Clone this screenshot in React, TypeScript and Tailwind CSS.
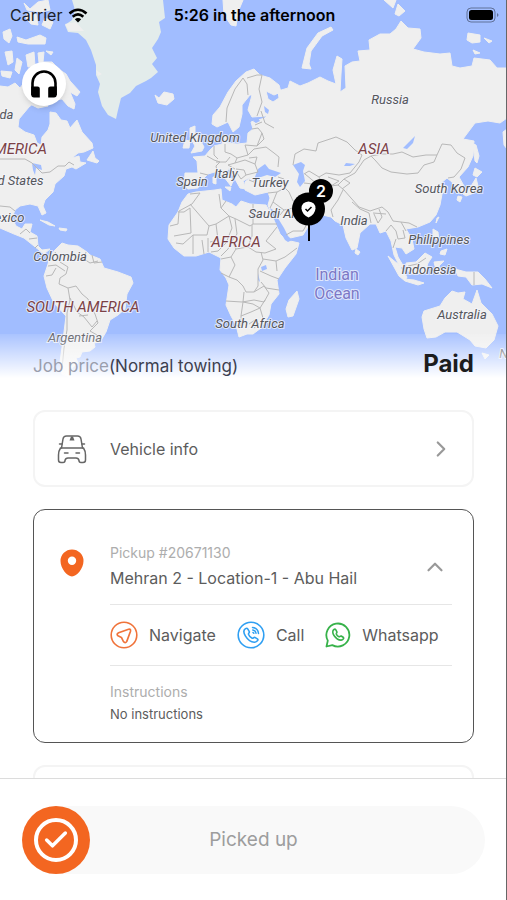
import { Check, ChevronRight, ChevronUp } from 'lucide-react';

type MapLabel = { text: string; x: number; y: number; kind: 'country' | 'continent' | 'ocean' };

const labels: MapLabel[] = [
  { text: 'Canada', x: -8, y: 119, kind: 'country' },
  { text: 'NORTH AMERICA', x: -10, y: 154, kind: 'continent' },
  { text: 'United States', x: 6, y: 185, kind: 'country' },
  { text: 'Mexico', x: 4, y: 222, kind: 'country' },
  { text: 'Colombia', x: 60, y: 261, kind: 'country' },
  { text: 'SOUTH AMERICA', x: 83, y: 312, kind: 'continent' },
  { text: 'Argentina', x: 75, y: 342, kind: 'country' },
  { text: 'United Kingdom', x: 195, y: 142, kind: 'country' },
  { text: 'Spain', x: 192, y: 186, kind: 'country' },
  { text: 'Italy', x: 226, y: 178, kind: 'country' },
  { text: 'Turkey', x: 270, y: 187, kind: 'country' },
  { text: 'Saudi Arabia', x: 284, y: 218, kind: 'country' },
  { text: 'AFRICA', x: 236, y: 247, kind: 'continent' },
  { text: 'South Africa', x: 250, y: 328, kind: 'country' },
  { text: 'Russia', x: 390, y: 104, kind: 'country' },
  { text: 'ASIA', x: 374, y: 154, kind: 'continent' },
  { text: 'South Korea', x: 449, y: 193, kind: 'country' },
  { text: 'India', x: 354, y: 225, kind: 'country' },
  { text: 'Philippines', x: 439, y: 244, kind: 'country' },
  { text: 'Indonesia', x: 429, y: 274, kind: 'country' },
  { text: 'Australia', x: 462, y: 319, kind: 'country' },
  { text: 'New Zealand', x: 536, y: 358, kind: 'country' },
  { text: 'Indian', x: 337, y: 280, kind: 'ocean' },
  { text: 'Ocean', x: 337, y: 299, kind: 'ocean' },
];

const land = [
  // north and central america
  'M0 86L8 87L15 83L20 88L23 84L28 92L34 103L29 107L24 113L19 119L18 127L25 132L34 135L37 143L41 145L42 137L48 130L50 124L50 112L56 113L61 120L67 121L70 128L77 120L82 132L92 143L93 148L84 152L78 153L72 158L79 156L80 162L86 163L76 169L72 167L66 169L64 176L55 184L53 192L45 200L43 206L46 213L42 215L38 206L30 204L20 206L15 210L12 218L16 226L22 229L25 224L32 224L30 232L37 236L38 246L42 250L50 249L44 254L34 246L24 238L14 234L0 228Z',
  // canadian islands
  'M3 32L10 29L12 36L9 43L4 39Z', 'M17 37L26 40L40 35L46 38L45 44L28 44L18 42Z', 'M24 3L30 9L38 2L48 0L50 10L40 12L27 10Z', 'M28 12L36 14L38 25L31 24L26 18Z', 'M45 18L53 22L50 29L42 25Z', 'M5 52L12 51L13 62L8 65Z', 'M17 58L22 62L19 74L15 70Z', 'M26 55L34 52L35 66L28 67Z', 'M1 71L12 72L10 78L2 76Z', 'M46 51L53 52L51 55Z', 'M38 53L44 52L43 62L52 62L60 70L66 74L70 81L80 92L77 96L70 92L75 104L74 109L68 106L62 99L55 100L60 92L52 80L40 72Z', 'M34 98L43 103L48 106L38 108L32 105Z',
  'M87 160L93 151L95 158L99 161L97 163Z',
  // caribbean
  'M40 220L48 222L55 226L49 225Z', 'M59 228L67 229L66 231L60 230Z',
  // south america
  'M50 256L55 250L62 243L68 245L78 246L87 252L90 255L100 259L104 268L118 272L131 277L133 283L127 294L125 309L118 315L110 320L106 332L100 342L94 343L95 347L90 351L82 352L80 357L76 358L78 363L72 368L71 378L62 374L60 362L63 340L66 316L54 303L47 288L44 276L48 264Z',
  // iceland, britain, ireland
  'M155 95L159 98L164 92L173 94L174 99L167 105L158 103Z', 'M190 128L195 126L195 133L199 138L204 147L202 151L191 153L195 146L190 137Z', 'M185 140L190 141L189 148L183 148Z',
  // eurasia
  'M212 124L213 115L220 107L228 92L236 81L246 72L254 69L260 75L270 78L279 85L281 92L274 95L266 91L268 99L273 102L279 98L278 91L288 88L290 81L300 86L308 83L320 77L328 81L336 84L333 70L337 56L342 59L341 74L340 92L346 88L345 66L352 62L360 61L358 51L370 50L369 40L380 34L390 34L396 29L401 21L408 28L420 29L421 38L413 49L424 52L440 54L450 53L452 66L460 68L472 66L474 58L490 60L497 68L507 68V118L500 123L488 121L475 123L463 139L474 141L473 156L468 167L459 177L464 186L462 194L456 191L452 182L447 178L440 184L448 187L442 194L440 205L436 215L430 222L418 227L406 229L412 239L414 249L406 254L402 248L395 247L398 257L404 267L400 267L394 255L391 241L386 231L380 233L376 224L370 224L360 233L357 248L352 250L346 238L343 225L335 221L331 217L318 214L303 208L297 205L302 212L309 214L311 222L303 235L286 239L277 222L271 213L268 205L270 198L268 192L255 195L245 190L245 182L251 177L243 181L246 189L240 188L235 179L229 168L227 172L233 181L231 186L224 177L218 171L208 174L200 182L198 188L188 189L184 186L185 173L198 173L197 161L193 157L205 156L210 150L214 146L222 144L224 135L228 136L227 143L237 144L247 143L248 133L253 129L251 122L265 118L267 116L252 117L248 110L252 95L250 95L242 105L242 114L239 127L233 132L228 122L217 127Z',
  'M302 68L307 48L318 33L331 27L333 30L322 36L311 51L309 64L311 69Z', 'M384 0L396 0L393 8Z', 'M398 4L405 11L399 16L395 14Z', 'M468 33L480 35L480 42L472 43L467 40Z', 'M484 38L492 41L489 43Z', 'M473 50L480 53L475 54Z', 'M223 0H243L238 12L236 26L231 25L224 15Z',
  // sicily and sardinia
  'M225 187L231 187L230 191Z', 'M213 177L216 177L216 184L213 183Z',
  // japan, taiwan, philippines
  'M473 144L476 145L479 156L477 163L475 161Z', 'M475 168L482 172L477 177L473 175Z', 'M476 178L478 186L474 193L466 196L463 194L470 188Z', 'M458 196L462 197L460 202L457 200Z', 'M437 218L439 217L436 223Z', 'M433 229L438 232L439 241L433 237Z', 'M441 251L447 249L445 255L440 254Z',
  // indonesia and new guinea
  'M388 256L398 264L407 277L405 281L399 276Z', 'M404 279L414 280L424 283L418 285L405 281Z', 'M406 263L416 262L425 253L432 257L428 263L425 273L412 274L407 270Z', 'M434 262L444 261L439 266L442 274L437 274Z', 'M455 269L466 272L478 272L485 279L492 288L482 284L472 285L466 277L458 276Z', 'M356 249L360 252L358 255L355 253Z',
  // africa, madagascar
  'M188 194L196 192L215 190L221 189L222 200L232 204L236 207L241 201L250 204L266 205L270 212L276 224L280 234L286 240L299 243L296 254L285 268L277 280L279 294L271 304L269 315L261 328L253 334L247 334L239 337L236 325L231 316L226 305L229 285L226 278L220 270L221 258L209 252L196 256L184 256L174 248L168 239L169 225L178 212L182 202Z',
  'M297 291L299 299L293 316L288 317L286 309L289 300Z',
  // australia, tasmania, new zealand
  'M422 317L424 311L440 306L445 298L452 291L458 293L465 292L463 299L472 304L477 290L481 303L492 314L498 326L494 340L486 348L475 346L470 340L462 335L457 332L445 332L436 337L427 338L424 329Z', 'M482 353L489 355L485 359Z', 'M503 132L507 129V149L504 145Z',
];

const seas = [
  'M253 182L258 169L265 164L269 169L281 173L275 177L267 175L258 178Z',
  'M293 165L301 162L305 165L303 171L305 181L300 187L297 182L299 174Z',
  'M344 166L346 163L355 164L350 166Z', 'M403 148L409 142L415 136L413 143L407 149Z',
  'M261 267L266 265L267 269L262 271Z', 'M258 273L260 282L258 280Z',
  'M32 163L41 165L42 170L36 168L35 175L33 170Z', 'M253 121L258 118L260 121L256 123Z', 'M264 106L269 110L268 114L265 112Z',
  // red sea
  'M270 208L273 210L284 228L288 236L292 240L288 242L285 240L277 226Z',
];

const borders = [
  // americas
  'M0 159L25 159L32 163L42 173L50 172L58 166L65 166L69 162L74 165', 'M0 206L10 207L15 211', 'M20 234L26 229L30 233M29 239L37 238M35 248L38 245',
  'M55 252L60 262L68 267L66 274L60 278L59 284L68 288L76 286L82 294L88 299L91 307L95 314L98 323L90 331L97 335L100 341', 'M48 266L56 265L65 271M46 276L52 275L56 268', 'M68 288L70 300L67 313L67 330L64 348L62 369', 'M70 298L77 312L84 317L92 327L97 321M79 316L88 315', 'M86 252L84 259L90 263L98 261M92 255L94 263L102 262',
  // europe
  'M226 122L227 108L235 89L243 78L247 84L248 95M247 78L257 75L262 75L259 89L262 102L257 116',
  'M200 173L208 175M207 156L214 160L220 162L216 166L217 171M214 146L214 155L218 159M225 144L225 152L231 154L237 158L248 155L245 145M230 157L226 162L216 162M237 158L235 163L228 165M248 155L254 149L266 147L274 153L279 157L278 167M245 145L257 146L262 133L258 128L252 129M262 133L264 139L257 146M235 163L245 160L255 164L258 172L246 175L244 170L236 169M255 164L257 157L249 158M246 175L241 179L237 173M228 165L235 169M262 122L255 125M261 111L265 123L274 128',
  'M254 182L249 180M268 193L277 192L285 188L289 192L293 201L300 205M285 188L284 179L278 177M277 192L273 202L270 208M273 202L284 210L297 207M284 210L280 215M286 235L293 231L303 231L308 222L303 214M304 183L313 184L322 192L318 204L322 213',
  // asia
  'M293 165L295 154L304 149L316 151L318 143L330 139L336 137L347 142L355 150L362 155L359 162L350 173L339 175L326 173L319 177L309 171L304 174',
  'M371 156L382 154L393 154L402 152L413 157L426 155L437 155L434 162L424 165L418 173L407 174L391 172L382 168L375 160L371 156',
  'M437 155L442 144L451 145L457 153L465 158L461 169L454 177L448 178', 'M371 156L364 160L355 173L344 179L338 185L344 190L351 198L359 207L370 211L382 207L388 212L393 221L401 222L409 223L417 227',
  'M338 185L331 186L326 195L321 201M319 177L322 183L331 186L339 181L328 177M343 190L338 200L331 210L333 217M352 202L360 209L369 213L371 223M374 214L378 223L382 217L379 209M386 231L391 225L396 231L398 239L405 238L403 230M396 239L393 248M401 222L406 231M373 213L386 214M344 179L350 183L342 189M305 174L317 184L325 185',
  'M474 272L474 285M408 266L417 264L426 258',
  // africa
  'M190 194L200 193L192 204L179 211L178 224L170 226M190 204L209 226L216 224L229 216L221 208L219 194M221 208L226 201M229 216L236 219L250 226L253 224L253 204M253 224H277M178 212H184L190 208M209 226L207 235L193 235L183 244L176 243M190 208L191 233L174 236M193 235L193 254M202 240L204 254M208 238L208 252M216 224L218 240L210 242M229 216L232 228L226 243L218 251L211 252M235 219L237 234L232 241L236 249L248 247L252 236L252 225M248 247L256 252L265 253L276 249L266 241L277 227M232 241L228 249L221 256M236 249L231 257L235 265L229 277L221 273M231 257L221 259M229 277L237 280L243 286L246 292H254L258 286L258 269L263 260L261 252M226 301L242 302L254 300M244 292L243 302L241 316L241 326L235 325M241 316L251 312L260 308L265 300M254 292L264 286L269 293L264 302L254 300M263 259L276 261L285 257L297 248M276 261L277 271M260 271L271 276L279 279M261 282L266 288L279 290M243 302L253 304L260 308L263 318M249 324L255 320L259 324L254 328',
];

const labelStyles = {
  country: 'fill-[#55565b] text-[13px] italic',
  continent: 'fill-[#7c4145] text-[15px] italic',
  ocean: 'fill-[#7c78c6] text-[16px] not-italic',
};

function WorldMap() {
  return (
    <svg
      className="absolute inset-0 h-full w-full"
      viewBox="0 0 507 378"
      preserveAspectRatio="xMidYMid slice"
      fontFamily="Roboto, sans-serif"
      role="img"
      aria-label="World map"
    >
      <rect width="507" height="378" fill="#a1bdff" />
      <path d={land.join('')} fill="#efefef" stroke="#efefef" strokeLinejoin="round" />
      <path d="M65 25L72 20L75 10L72 0H163L165 18L159 22L161 32L158 39L152 48L157 58L152 64L158 72L151 78L146 81L136 86L130 93L121 98L118 110L116 119L108 115L102 106L98 92L100 84L96 75L96 65L91 50L86 40L78 33L68 32Z" fill="#e3eceb" />
      <path d="M96 70L102 74L98 76ZM65 24L76 22L84 31L69 31Z" fill="#efefef" />
      <path d={seas.join('')} fill="#a1bdff" />
      <path d={borders.join('')} fill="none" stroke="#b8b8b8" strokeWidth="1" strokeLinejoin="round" />
      {labels.map((label) => (
        <text
          key={label.text}
          x={label.x}
          y={label.y}
          textAnchor="middle"
          stroke="#f4f5fb"
          strokeWidth="2"
          strokeOpacity="0.75"
          paintOrder="stroke"
          className={labelStyles[label.kind]}
        >
          {label.text}
        </text>
      ))}
      <path d="M309 222V241" stroke="#000" strokeWidth="2" />
      <circle cx="308.500" cy="209" r="16.500" />
      <circle cx="321" cy="191" r="12" />
      <path d="M308.500 201.500Q315.500 202 315.500 208.500Q315 214.500 308.500 217.500Q302 214.500 301.500 208.500Q301.500 202 308.500 201.500Z" fill="#fff" />
      <path d="M305.500 209L307.500 211L311.500 207" fill="none" stroke="#000" strokeWidth="1.500" />
      <text x="321" y="197" textAnchor="middle" fill="#fff" className="font-[Inter] text-[16px] font-semibold">2</text>
    </svg>
  );
}

function WifiIcon() {
  return (
    <svg width="20" height="15" viewBox="0 0 20 15" aria-hidden="true">
      <path d="M1.500 5.500Q10 -2 18.500 5.500M4.700 8.700Q10 4 15.300 8.700" fill="none" stroke="#000" strokeWidth="2.600" />
      <path d="M10 14.500L6.800 11.300Q10 8.700 13.200 11.300Z" />
    </svg>
  );
}

function BatteryIcon() {
  return (
    <svg width="33" height="16" viewBox="0 0 33 16" aria-hidden="true">
      <rect x="1" y="1" width="28" height="14" rx="4" fill="none" stroke="#000" strokeOpacity="0.4" />
      <rect x="3" y="3" width="24" height="10" rx="2.500" />
      <path d="M31 6Q34 8 31 10Z" fillOpacity="0.4" />
    </svg>
  );
}

function HeadphonesIcon() {
  return (
    <svg width="28" height="30" viewBox="0 0 28 30" aria-hidden="true">
      <path d="M2.500 26V14A11.500 11.500 0 0 1 25.500 14V26" fill="none" stroke="#000" strokeWidth="2.600" />
      <path d="M1.200 17.500H7.500Q9.800 17.500 9.800 19.500V28.500H4Q1.200 28.500 1.200 25.500ZM26.800 17.500H20.500Q18.200 17.500 18.200 19.500V28.500H24Q26.800 28.500 26.800 25.500Z" />
    </svg>
  );
}

function CarIcon() {
  return (
    <svg width="30" height="30" viewBox="0 0 30 30" fill="none" stroke="#666" strokeWidth="1.500" strokeLinecap="round" strokeLinejoin="round" aria-hidden="true">
      <path d="M4.500 14L6 5Q6.500 2 9.500 2H20.500Q23.500 2 24 5L25.500 14" />
      <path d="M3.500 14H26.500Q28.500 17 28.500 21V26Q28.500 28.500 26 28.500H24Q22 28.500 22 26.500Q21.500 24 19 24H11Q8.500 24 8 26.500Q8 28.500 6 28.500H4Q1.500 28.500 1.500 26V21Q1.500 17 3.500 14Z" />
      <path d="M2.500 10H5M25 10H27.500M7.500 19H11M19 19H22.500" />
      <path d="M12.500 6.500H17.500L16 2.500H14Z" fill="#666" stroke="none" />
    </svg>
  );
}

function PinIcon() {
  return (
    <svg width="24" height="28" viewBox="0 0 24 28" aria-hidden="true">
      <path fillRule="evenodd" fill="#f36621" d="M12 0.500A11.500 11.500 0 0 1 23.500 12C23.500 19 17 27.500 12 27.500S0.500 19 0.500 12A11.500 11.500 0 0 1 12 0.500ZM12 7.500A4.200 4.200 0 1 0 12 15.900A4.200 4.200 0 1 0 12 7.500Z" />
    </svg>
  );
}

function NavigateIcon() {
  return (
    <svg width="28" height="28" viewBox="0 0 28 28" fill="none" stroke="#f0733a" strokeLinejoin="round" aria-hidden="true">
      <circle cx="14" cy="14" r="12.800" strokeWidth="1.600" />
      <path d="M18.600 8.200L8.600 11.700Q6 13 8 14.800L11.400 16.400L13.400 20.500Q15.200 22.800 16.800 20.400L20.500 10.200Q20.900 7.600 18.600 8.200Z" strokeWidth="1.700" />
    </svg>
  );
}

function CallIcon() {
  return (
    <svg width="28" height="28" viewBox="0 0 28 28" fill="none" stroke="#2f9ff2" strokeLinecap="round" strokeLinejoin="round" aria-hidden="true">
      <circle cx="14" cy="14" r="12.800" strokeWidth="1.600" />
      <path d="M8.500 7.700C6.500 9 6.500 12 8.500 15.200C10.800 18.900 14.500 21.300 17.500 21.200C19.500 21.100 21.500 19.200 20.700 18.200L17.900 16.400C16.700 15.900 16.300 17.600 15.200 17.200C13.600 16.500 12 14.700 11.500 13.200C11.200 12.100 12.800 11.800 12.300 10.600L10.700 7.900C10.200 7.100 9.300 7.200 8.500 7.700Z" strokeWidth="1.600" />
      <path d="M15.500 6.500Q21 7 21.500 12.500M15.800 9Q18.500 9.500 19 12.200M16 11.500L16.800 12.200" strokeWidth="1.500" />
    </svg>
  );
}

function WhatsappIcon() {
  return (
    <svg width="26" height="26" viewBox="0 0 26 26" fill="none" stroke="#37b24a" strokeLinecap="round" strokeLinejoin="round" aria-hidden="true">
      <path d="M1.500 24.500L2.800 18.600A11.500 11.500 0 1 1 7.300 23.100Z" strokeWidth="1.800" />
      <path d="M9 7.500C7.300 8.600 7.400 11.200 9 13.500C10.900 16.300 13.700 18.200 16.200 18.100C17.900 18 19.200 16.300 18.500 15.500L16.200 14C15.200 13.600 14.900 15 14 14.700C12.800 14.200 11.700 13 11.300 11.900C11.100 11.100 12.200 10.800 11.900 9.900L10.700 7.700C10.200 7 9.600 7.100 9 7.500Z" strokeWidth="1.600" />
    </svg>
  );
}

const actions = [
  { label: 'Navigate', icon: NavigateIcon },
  { label: 'Call', icon: CallIcon },
  { label: 'Whatsapp', icon: WhatsappIcon },
];

export default function App() {
  return (
    <div className="relative flex h-screen flex-col overflow-hidden bg-white font-[Inter,sans-serif] text-[#5c5c5c]">
      <header className="relative flex h-[378px] shrink-0 flex-col">
        <WorldMap />
        <div className="absolute inset-x-0 bottom-0 h-11 bg-linear-to-b from-white/10 to-white" />

        <div className="relative grid h-[30px] grid-cols-[1fr_auto_1fr] items-center pr-2 pl-[10px] text-base text-[#1b1f2a]">
          <div className="flex items-center gap-[6px]">
            <span>Carrier</span>
            <WifiIcon />
          </div>
          <span className="font-semibold text-black">5:26 in the afternoon</span>
          <div className="flex justify-end">
            <BatteryIcon />
          </div>
        </div>

        <button aria-label="Support" className="relative mt-8 ml-[22px] flex size-11 items-center justify-center rounded-full bg-white shadow-md">
          <HeadphonesIcon />
        </button>

        <div className="relative mt-auto flex items-baseline justify-between px-[33px]">
          <p className="text-[17px] leading-6 text-[#3c4050]">
            <span className="text-[#9a9ead]">Job price</span>(Normal towing)
          </p>
          <p className="text-2xl leading-6 font-bold text-[#1c1c1e]">Paid</p>
        </div>
      </header>

      <main className="flex min-h-0 flex-1 flex-col gap-[22px] overflow-hidden px-[33px] pt-8">
        <button className="flex h-[77px] shrink-0 items-center rounded-xl border-2 border-[#f4f4f4] pr-[18px] pl-[22px] text-left">
          <CarIcon />
          <span className="ml-[23px] flex-1 text-base">Vehicle info</span>
          <ChevronRight size={26} strokeWidth={2} className="text-[#999]" />
        </button>

        <section className="flex shrink-0 rounded-xl border border-[#555] pt-[33px] pr-[21px] pb-[18px] pl-[26px]">
          <div className="w-[50px] shrink-0 pt-[6px]">
            <PinIcon />
          </div>
          <div className="min-w-0 flex-1">
            <div className="flex items-center justify-between pb-[14px]">
              <div>
                <p className="text-sm leading-5 text-[#adadad]">Pickup #20671130</p>
                <h2 className="mt-[3px] text-base leading-6">Mehran 2 - Location-1 - Abu Hail</h2>
              </div>
              <button aria-label="Collapse" className="mr-1">
                <ChevronUp size={26} strokeWidth={2} className="text-[#999]" />
              </button>
            </div>
            <div className="flex h-[62px] items-center gap-[21px] border-y border-[#e6e6e6]">
              {actions.map(({ label, icon: Icon }) => (
                <button key={label} className="flex items-center gap-[11px] text-base">
                  <Icon />
                  {label}
                </button>
              ))}
            </div>
            <p className="mt-4 text-sm leading-5 text-[#adadad]">Instructions</p>
            <p className="mt-[2px] text-[13px] leading-5">No instructions</p>
          </div>
        </section>

        <div className="h-[77px] shrink-0 rounded-xl border-2 border-[#f4f4f4]" />
      </main>

      <footer className="shrink-0 border-t border-[#dcdcdc] bg-white px-[22px] pt-[27px] pb-[26px]">
        <div className="relative flex h-[68px] items-center justify-center rounded-full bg-[#f9f9f9] text-[19px] text-[#9d9d9d]">
          <button
            aria-label="Confirm pickup"
            className="absolute inset-y-0 left-0 flex size-[68px] items-center justify-center rounded-full bg-[#f36621] text-white"
          >
            <span className="flex size-11 items-center justify-center rounded-full border-4 border-white">
              <Check size={28} strokeWidth={3} />
            </span>
          </button>
          <span>Picked up</span>
        </div>
      </footer>

      <div className="pointer-events-none absolute inset-y-0 right-0 w-px bg-[#666]" />
    </div>
  );
}
